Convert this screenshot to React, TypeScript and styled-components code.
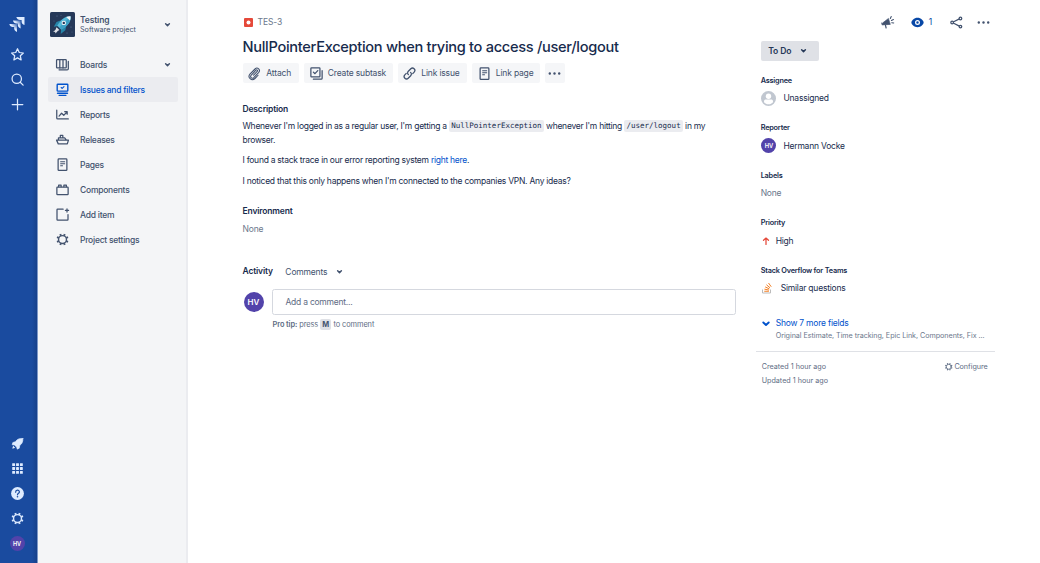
import React from "react";
import styled, { createGlobalStyle } from "styled-components";

const GlobalStyle = createGlobalStyle`
  * { box-sizing: border-box; }
  html, body, #root { margin: 0; height: 100%; }
  body {
    background: #fff;
    color: #172b4d;
    font-family: Inter, "Liberation Sans", sans-serif;
    font-size: 8.5px;
    overflow: hidden;
  }
`;

const Page = styled.div`
  display: flex;
  height: 562.5px;
`;

const Rail = styled.nav`
  width: 37.5px;
  flex: none;
  display: flex;
  flex-direction: column;
  justify-content: space-between;
  padding: 9px 2.5px 6.5px 0;
  color: #deebff;
  background: linear-gradient(to right, #1a4b9f 0, #1a4b9f 32px, #163f88 37.5px);
  border-right: 0.5px solid #7d98c8;
`;

const RailGroup = styled.div`
  display: flex;
  flex-direction: column;
`;

const RailItem = styled.div`
  height: 25px;
  display: flex;
  align-items: center;
  justify-content: center;
`;

const RailLogo = styled(RailItem)`
  height: 33px;
  padding: 0 1px 2.5px 0;
`;

const Sidebar = styled.aside`
  width: 150.5px;
  flex: none;
  background: #f4f5f7;
  border-right: 2px solid #ebecf0;
  padding: 12px 8px 0 10px;
`;

const ProjectHeader = styled.div`
  display: flex;
  align-items: center;
  height: 25px;
  padding: 0 3px 0 2.5px;
  margin-bottom: 15px;
  color: #42526e;
`;

const ProjectText = styled.div`
  flex: 1;
  margin-left: 5px;
`;

const ProjectName = styled.div`
  font-weight: 600;
  line-height: 10px;
  letter-spacing: -0.14px;
  margin-top: -1px;
`;

const ProjectKind = styled.div`
  font-size: 7.2px;
  line-height: 9px;
  letter-spacing: -0.02px;
`;

const NavItem = styled.div<{ $active?: boolean }>`
  display: flex;
  align-items: center;
  height: 25px;
  padding: 0 3px 0 7.5px;
  border-radius: 2px;
  font-weight: 500;
  letter-spacing: -0.24px;
  color: ${(p) => (p.$active ? "#0052cc" : "#42526e")};
  background: ${(p) => (p.$active ? "#ebecf0" : "transparent")};
`;

const NavLabel = styled.span`
  flex: 1;
  margin-left: 10px;
`;

const Main = styled.main`
  width: 493.3px;
  flex: none;
  margin-left: 54.5px;
  padding-top: 14.5px;
`;

const Breadcrumb = styled.div`
  display: flex;
  align-items: center;
  height: 15px;
  gap: 4.5px;
  padding-left: 1.5px;
  color: #6b778c;
  letter-spacing: -0.1px;
`;

const Title = styled.h1`
  margin: 8px 0 6px;
  font-size: 14.6px;
  line-height: 19.5px;
  font-weight: 500;
  letter-spacing: -0.3px;
  white-space: nowrap;
`;

const Toolbar = styled.div`
  display: flex;
  gap: 5px;
  margin-bottom: 19.5px;
`;

const ToolButton = styled.div<{ $w: number }>`
  width: ${(p) => p.$w}px;
  height: 20px;
  display: flex;
  align-items: center;
  padding-left: ${(p) => (p.$w > 20 ? 4.8 : 2.3)}px;
  gap: 4px;
  border-radius: 2px;
  background: #f5f6f8;
  color: #42526e;
  letter-spacing: -0.17px;
  white-space: nowrap;
`;

const Heading = styled.h2`
  margin: 0;
  font-size: 8.5px;
  line-height: 13px;
  font-weight: 600;
  letter-spacing: -0.16px;
`;

const Paragraph = styled.p<{ $top?: number }>`
  margin: ${(p) => p.$top ?? 6.5}px 0 0;
  line-height: 14.1px;
  letter-spacing: -0.262px;
`;

const Code = styled.code`
  font-family: "DejaVu Sans Mono", monospace;
  font-size: 7.5px;
  line-height: 1;
  letter-spacing: 0;
  background: #ebecf0;
  border-radius: 2px;
  padding: 1.2px 2.3px;
`;

const Link = styled.a`
  color: #0052cc;
`;

const Muted = styled.div`
  color: #6b778c;
  line-height: 14px;
  letter-spacing: -0.15px;
`;

const Environment = styled.section`
  margin-top: 17px;
  ${Muted} {
    margin-top: 4.5px;
  }
`;

const ActivityBar = styled.div`
  display: flex;
  align-items: center;
  height: 14px;
  margin-top: 28.5px;
  color: #42526e;
  letter-spacing: -0.18px;
  ${Heading} {
    color: #172b4d;
    margin-right: 12.5px;
  }
  svg {
    margin-left: 4.5px;
  }
`;

const CommentRow = styled.div`
  display: flex;
  align-items: center;
  margin-top: 10.5px;
  padding-left: 1px;
`;

const Avatar = styled.div<{ $size: number; $font: number }>`
  width: ${(p) => p.$size}px;
  height: ${(p) => p.$size}px;
  flex: none;
  border-radius: 50%;
  background: #5243aa;
  color: #fff;
  font-size: ${(p) => p.$font}px;
  font-weight: 600;
  letter-spacing: 0;
  display: flex;
  align-items: center;
  justify-content: center;
`;

const CommentBox = styled.div`
  flex: 1;
  height: 26px;
  margin-left: 8.5px;
  padding-left: 12.5px;
  border: 1px solid #d5d8df;
  border-radius: 2.5px;
  display: flex;
  align-items: center;
  color: #5e6c84;
  letter-spacing: -0.24px;
`;

const Tip = styled.div`
  margin: 4px 0 0 30px;
  font-size: 7.4px;
  line-height: 11px;
  letter-spacing: -0.08px;
  color: #5e6c84;
  b {
    font-weight: 600;
  }
`;

const Key = styled.kbd`
  font: 700 7.4px Inter, sans-serif;
  color: #42526e;
  background: #dfe1e6;
  border-radius: 2px;
  padding: 1px 2px;
  margin: 0 0.5px 0 0;
`;

const Details = styled.aside`
  width: 239px;
  flex: none;
  margin-left: 19.9px;
  padding: 14.5px 5px 0;
`;

const Actions = styled.div`
  display: flex;
  align-items: center;
  justify-content: flex-end;
  height: 15px;
  margin-right: -1px;
  color: #42526e;
`;

const Watch = styled.div`
  display: flex;
  align-items: center;
  gap: 4px;
  margin: 0 16.5px 0 14.5px;
  color: #0747a6;
`;

const ShareSlot = styled.div`
  display: flex;
  margin-right: 12px;
`;

const Status = styled.div`
  width: 58px;
  height: 20px;
  margin: 11px 0 15px;
  padding: 0 7.5px;
  display: flex;
  align-items: center;
  justify-content: space-between;
  border-radius: 2px;
  background: #dfe1e6;
  color: #253858;
  font-size: 8.6px;
  font-weight: 600;
  letter-spacing: -0.15px;
`;

const Field = styled.section`
  height: 47.5px;
`;

const FieldLabel = styled.h3`
  margin: 0;
  font-size: 7.3px;
  line-height: 10px;
  font-weight: 600;
  letter-spacing: -0.2px;
`;

const FieldValue = styled.div<{ $gap?: number; $muted?: boolean }>`
  display: flex;
  align-items: center;
  height: 16px;
  margin-top: 4.8px;
  gap: ${(p) => p.$gap ?? 0}px;
  color: ${(p) => (p.$muted ? "#6b778c" : "#172b4d")};
  letter-spacing: -0.22px;
`;

const AvatarSlot = styled.div`
  display: flex;
  padding-left: 0.75px;
`;

const More = styled.div`
  display: flex;
  gap: 5px;
  margin-top: 4px;
  color: #0052cc;
  line-height: 13px;
  letter-spacing: -0.22px;
`;

const MoreHint = styled.div`
  margin-left: 15px;
  font-size: 7.2px;
  line-height: 11px;
  letter-spacing: -0.05px;
  color: #6b778c;
  white-space: nowrap;
`;

const Footer = styled.footer`
  margin: 10px -5px 0;
  padding: 8px 7px 0 6px;
  border-top: 1px solid #dfe1e6;
  display: flex;
  justify-content: space-between;
  color: #5e6c84;
  font-size: 7.2px;
  line-height: 14px;
`;

const Configure = styled.div`
  display: flex;
  align-items: center;
  height: 14px;
  gap: 1px;
  letter-spacing: -0.04px;
`;

type IconProps = { size?: number; children: React.ReactNode };

const Icon = ({ size = 15, children }: IconProps) => (
  <svg
    width={size}
    height={size}
    viewBox="0 0 24 24"
    fill="none"
    stroke="currentColor"
    strokeWidth="2"
    strokeLinecap="round"
    strokeLinejoin="round"
    style={{ flex: "none" }}
  >
    {children}
  </svg>
);

const Chevron = () => (
  <Icon>
    <path d="M9 10.8l3 3 3-3" strokeWidth="2.4" />
  </Icon>
);

const Gear = ({ size = 15 }: { size?: number }) => (
  <Icon size={size}>
    <circle cx="12" cy="12" r="6.3" strokeWidth="2.2" />
    <g strokeWidth="3.1" strokeLinecap="butt">
      {[22.5, 67.5, 112.5, 157.5, 202.5, 247.5, 292.5, 337.5].map((a) => (
        <path key={a} d="M12 5.500V2.500" transform={`rotate(${a} 12 12)`} />
      ))}
    </g>
  </Icon>
);

const PageIcon = () => (
  <Icon>
    <rect x="5" y="3" width="14" height="18.500" rx="1.2" />
    <path d="M9 7.500h6.500M9 10.800h6.500M9 14h3" strokeWidth="1.7" />
  </Icon>
);

const Dots = () => (
  <Icon>
    <g fill="currentColor" stroke="none">
      <circle cx="4.500" cy="12" r="1.900" />
      <circle cx="12" cy="12" r="1.900" />
      <circle cx="19.500" cy="12" r="1.900" />
    </g>
  </Icon>
);

const JiraMark = () => (
  <svg width="16" height="16" viewBox="0 0 16 16">
    <defs>
      <linearGradient id="fade" x1="1" y1="0" x2="0.2" y2="0.8">
        <stop offset="0.15" stopColor="#deebff" stopOpacity="0.35" />
        <stop offset="0.55" stopColor="#deebff" />
      </linearGradient>
    </defs>
    <path d="M7.300 1h8.200v8.100c-1.900-.6-2.900-1.800-2.900-3.600V4h-1.500C9.200 4 7.900 3 7.300 1z" fill="#deebff" />
    <path d="M3.900 4.500h7.700v7.900C9.700 11.800 8.800 10.600 8.800 9V7.400H7.400C5.600 7.400 4.400 6.400 3.900 4.500z" fill="url(#fade)" />
    <path d="M.300 8h7.700v7.900C6.100 15.300 5.200 14.100 5.200 12.500v-1.600H3.800C2 10.900.8 9.900.3 8z" fill="url(#fade)" />
  </svg>
);

const ProjectAvatar = () => (
  <svg width="25" height="25" viewBox="0 0 25 25">
    <rect width="25" height="25" rx="1.5" fill="#253858" />
    <g fill="#6b7fa6">
      <circle cx="7" cy="4" r=".5" />
      <circle cx="4" cy="9" r=".4" />
      <circle cx="21" cy="15" r=".5" />
      <circle cx="17" cy="21" r=".5" />
      <circle cx="11" cy="3.500" r=".4" />
      <circle cx="22" cy="20" r=".4" />
    </g>
    <path d="M11 8.200L6.500 10l-2.700 4.800 4.500-.8zM16.500 13.500l-1.200 4.800-4.600 3.700.5-5z" fill="#2684a8" />
    <path d="M20.500 4.200c.5 4.800-1.500 8.800-9.300 13.300l-4-3.800C11.200 6.800 15.500 4 20.500 4.200z" fill="#57b8d8" />
    <path d="M20.500 4.200c.5 4.800-1.500 8.800-9.300 13.300l-2-1.900z" fill="#3d9fc4" />
    <path d="M20.500 4.200c.1 1.600 0 3-.6 4.300l-3.700-3.600c1.300-.5 2.700-.8 4.300-.7z" fill="#f4f5f7" />
    <circle cx="13.800" cy="10.900" r="2.200" fill="#f4f5f7" />
    <circle cx="13.800" cy="10.900" r="1.200" fill="#253858" />
    <path d="M6.500 15.200l2.900 2.900-1.700.8-2.200 2.700-.4-1.800-2 .3 2.400-2.400z" fill="#dfe1e6" />
  </svg>
);

const BoardsIcon = () => (
  <Icon>
    <rect x="2.500" y="4" width="15.500" height="13.500" rx="1" />
    <path d="M7.700 4v13.500M12.800 4v13.500M6.500 20.500h13c1 0 1.800-.8 1.800-1.800V7" />
  </Icon>
);

const IssuesIcon = () => (
  <Icon>
    <rect x="3.500" y="3.500" width="17" height="11" rx="1" strokeWidth="2.200" />
    <path d="M9.800 8.800l1.600 1.500 3-3" strokeWidth="1.700" />
    <path d="M4 18h16M6.500 21.300h11" strokeWidth="2.200" />
  </Icon>
);

const ReportsIcon = () => (
  <Icon>
    <path d="M2.800 5v12.500c0 .8.600 1.500 1.500 1.500h17M6.500 14.500l4-4.500 3.500 3.300 5-5.300M15.500 7.500h4v4" />
  </Icon>
);

const ReleasesIcon = () => (
  <Icon>
    <path d="M2.500 13h19l-1.800 6H5.200zM5.500 12.500V9.500h10l2.500 3M8.500 9V5.500h4V9" />
  </Icon>
);

const ComponentsIcon = () => (
  <Icon>
    <rect x="3" y="8" width="18" height="12" rx="1" />
    <path d="M5.800 7.500V5h4v2.500M14.200 7.500V5h4v2.500" />
  </Icon>
);

const AddItemIcon = () => (
  <Icon>
    <path d="M13 3.500H4.200c-.6 0-1 .4-1 1v15.300c0 .6.400 1 1 1h15.600c.6 0 1-.4 1-1V12M19.200 3v5M16.700 5.500h5" />
  </Icon>
);

const navItems: { label: string; icon: React.ReactNode; active?: boolean; open?: boolean }[] = [
  { label: "Boards", icon: <BoardsIcon />, open: true },
  { label: "Issues and filters", icon: <IssuesIcon />, active: true },
  { label: "Reports", icon: <ReportsIcon /> },
  { label: "Releases", icon: <ReleasesIcon /> },
  { label: "Pages", icon: <PageIcon /> },
  { label: "Components", icon: <ComponentsIcon /> },
  { label: "Add item", icon: <AddItemIcon /> },
  { label: "Project settings", icon: <Gear /> },
];

const AttachIcon = () => (
  <Icon>
    <path
      d="M10.500 14.700l5.800-6c1.500-1.600-.5-3.500-2-2l-7.500 7.800c-2.800 3.200 1 6.800 4 4l7.700-8c4-4.500-1.700-9.700-5.700-5.700L5 12.700c-5 5.500 2.500 12.500 7.700 7.300l5-5.200"
      strokeWidth="1.700"
    />
  </Icon>
);

const SubtaskIcon = () => (
  <Icon>
    <rect x="3" y="3" width="14.500" height="14.500" rx="1" />
    <path d="M7 9.800l2.500 2.500 4.500-5M7 21h12.500c.9 0 1.500-.6 1.500-1.500V7.500" />
  </Icon>
);

const LinkIcon = () => (
  <Icon>
    <path d="M10.300 13.800c-1.800-1.600-1.700-3.800-.2-5.300l4-4c3.500-3.400 8.800 1.600 5.400 5.200l-2.300 2.400M13.700 10.200c1.800 1.600 1.700 3.800.2 5.300l-4 4c-3.500 3.400-8.800-1.600-5.400-5.200l2.300-2.400" />
  </Icon>
);

const BugIcon = () => (
  <svg width="9" height="9" viewBox="0 0 9 9">
    <rect width="9" height="9" rx="1" fill="#e5493a" />
    <circle cx="4.500" cy="4.500" r="2" fill="#fff" />
  </svg>
);

const Megaphone = () => (
  <Icon>
    <path d="M4.500 12.500L13.500 5.500l3 9.500-11.500.8z" fill="currentColor" strokeWidth="1" />
    <path d="M3 13l.8 2.600M8.800 16.500l1 4.300" strokeWidth="1.900" />
    <path d="M16.500 5.500l1.500-3M18.300 8.800l3.200-1.600M18.800 12.300l3.200.5" strokeWidth="1.700" />
  </Icon>
);

const Eye = () => (
  <Icon>
    <path d="M12 4.500c-5.500 0-9.800 4.500-9.800 7.500s4.300 7.500 9.800 7.500 9.800-4.500 9.800-7.500S17.500 4.500 12 4.500z" fill="currentColor" stroke="none" />
    <circle cx="12" cy="12" r="3" stroke="#fff" strokeWidth="2" />
  </Icon>
);

const Share = () => (
  <Icon>
    <circle cx="5" cy="12" r="2.100" />
    <circle cx="18.300" cy="5.500" r="2.100" />
    <circle cx="18.300" cy="18.500" r="2.100" />
    <path d="M7.500 10.800l8.300-4.200M7.500 13.200l8.300 4.200" />
  </Icon>
);

const UserIcon = () => (
  <svg width="15" height="15" viewBox="0 0 24 24">
    <circle cx="12" cy="12" r="12" fill="#c1c7d0" />
    <circle cx="12" cy="8.300" r="4.300" fill="#fff" />
    <path d="M4.800 18v-1.500c0-2 1.300-3 3-3h8.400c1.700 0 3 1 3 3V18c-1.700 2-4.300 3.300-7.200 3.300S6.500 20 4.800 18z" fill="#fff" />
  </svg>
);

const PriorityIcon = () => (
  <svg width="10" height="10" viewBox="0 0 16 16" fill="none" stroke="#e5493a" strokeWidth="2" strokeLinecap="round" strokeLinejoin="round">
    <path d="M8 13.500V3.300M4 6.800L8 3.300l4 3.500" />
  </svg>
);

const StackIcon = () => (
  <svg width="12" height="12" viewBox="0 0 24 24" fill="none">
    <path d="M3 15v7h16v-7" stroke="#bcbbbb" strokeWidth="2" />
    <path d="M6.500 18.500h9.300M6.900 14.300l9.100 1.900M8.300 9.800l8.400 3.900M10.900 5.500l7.100 6M15 2l5.500 7.500" stroke="#f48024" strokeWidth="2" />
  </svg>
);

export default function App() {
  return (
    <>
      <GlobalStyle />
      <Page>
        <Rail>
          <RailGroup>
            <RailLogo><JiraMark /></RailLogo>
            <RailItem>
              <Icon>
                <path d="M12 2.800l2.800 6 6.600.8-4.900 4.500 1.300 6.600L12 17.400l-5.800 3.300 1.300-6.600L2.600 9.600l6.600-.8z" />
              </Icon>
            </RailItem>
            <RailItem>
              <Icon>
                <circle cx="10.800" cy="10.800" r="7.500" />
                <path d="M16.300 16.300l4.700 4.700" />
              </Icon>
            </RailItem>
            <RailItem>
              <Icon><path d="M12 3.500v17M3.500 12h17" /></Icon>
            </RailItem>
          </RailGroup>
          <RailGroup>
            <RailItem>
              <Icon>
                <path d="M20.500 4c-5-.8-9 1-11.800 5L4.500 10.500 3.500 14l3.500.3 3.800 3.500L11.500 21l3.300-1.500.8-4.300c4-3 5.500-6.700 4.900-11.200z" fill="currentColor" strokeWidth="1" />
                <path d="M5.500 17l-.8 2.300L7 18.500" strokeWidth="1.800" />
              </Icon>
            </RailItem>
            <RailItem>
              <Icon>
                <g fill="currentColor" stroke="none">
                  {[3.5, 9.7, 15.9].map((y) =>
                    [3.5, 9.7, 15.9].map((x) => (
                      <rect key={`${x}-${y}`} x={x} y={y} width="4.600" height="4.600" rx=".6" />
                    ))
                  )}
                </g>
              </Icon>
            </RailItem>
            <RailItem>
              <Icon>
                <circle cx="12" cy="12" r="10.300" fill="currentColor" stroke="none" />
                <path d="M9 9.800c0-4 6-4 6-.3 0 2.200-3 2.200-3 4.500" stroke="#1a4b9f" />
                <circle cx="12" cy="17.200" r="1.300" fill="#1a4b9f" stroke="none" />
              </Icon>
            </RailItem>
            <RailItem><Gear /></RailItem>
            <RailItem><Avatar $size={15} $font={5.6}>HV</Avatar></RailItem>
          </RailGroup>
        </Rail>

        <Sidebar>
          <ProjectHeader>
            <ProjectAvatar />
            <ProjectText>
              <ProjectName>Testing</ProjectName>
              <ProjectKind>Software project</ProjectKind>
            </ProjectText>
            <Chevron />
          </ProjectHeader>
          {navItems.map((item) => (
            <NavItem key={item.label} $active={item.active}>
              {item.icon}
              <NavLabel>{item.label}</NavLabel>
              {item.open && <Chevron />}
            </NavItem>
          ))}
        </Sidebar>

        <Main>
          <Breadcrumb><BugIcon />TES-3</Breadcrumb>
          <Title>NullPointerException when trying to access /user/logout</Title>
          <Toolbar>
            <ToolButton $w={56.5}><AttachIcon />Attach</ToolButton>
            <ToolButton $w={88.5}><SubtaskIcon />Create subtask</ToolButton>
            <ToolButton $w={69.5}><LinkIcon />Link issue</ToolButton>
            <ToolButton $w={68}><PageIcon />Link page</ToolButton>
            <ToolButton $w={20}><Dots /></ToolButton>
          </Toolbar>
          <Heading>Description</Heading>
          <Paragraph $top={3}>
            Whenever I'm logged in as a regular user, I'm getting a <Code>NullPointerException</Code> whenever I'm
            hitting <Code>/user/logout</Code> in my browser.
          </Paragraph>
          <Paragraph>
            I found a stack trace in our error reporting system <Link>right here</Link>.
          </Paragraph>
          <Paragraph>I noticed that this only happens when I'm connected to the companies VPN. Any ideas?</Paragraph>
          <Environment>
            <Heading>Environment</Heading>
            <Muted>None</Muted>
          </Environment>
          <ActivityBar>
            <Heading>Activity</Heading>
            Comments
            <Chevron />
          </ActivityBar>
          <CommentRow>
            <Avatar $size={20} $font={8}>HV</Avatar>
            <CommentBox>Add a comment...</CommentBox>
          </CommentRow>
          <Tip>
            <b>Pro tip:</b> press <Key>M</Key> to comment
          </Tip>
        </Main>

        <Details>
          <Actions>
            <Megaphone />
            <Watch><Eye />1</Watch>
            <ShareSlot><Share /></ShareSlot>
            <Dots />
          </Actions>
          <Status>To Do<Chevron /></Status>
          <Field>
            <FieldLabel>Assignee</FieldLabel>
            <FieldValue $gap={7}><AvatarSlot><UserIcon /></AvatarSlot>Unassigned</FieldValue>
          </Field>
          <Field>
            <FieldLabel>Reporter</FieldLabel>
            <FieldValue $gap={7}>
              <AvatarSlot><Avatar $size={15} $font={5.8}>HV</Avatar></AvatarSlot>Hermann Vocke
            </FieldValue>
          </Field>
          <Field>
            <FieldLabel>Labels</FieldLabel>
            <FieldValue $muted>None</FieldValue>
          </Field>
          <Field>
            <FieldLabel>Priority</FieldLabel>
            <FieldValue $gap={5}><PriorityIcon />High</FieldValue>
          </Field>
          <Field>
            <FieldLabel>Stack Overflow for Teams</FieldLabel>
            <FieldValue $gap={8}><StackIcon />Similar questions</FieldValue>
          </Field>
          <More>
            <svg width="10" height="13" viewBox="0 0 10 13" fill="none" stroke="currentColor" strokeWidth="1.900" strokeLinecap="round" strokeLinejoin="round">
              <path d="M2.300 5.500L5 8l2.700-2.500" />
            </svg>
            Show 7 more fields
          </More>
          <MoreHint>Original Estimate, Time tracking, Epic Link, Components, Fix ...</MoreHint>
          <Footer>
            <div>
              <div>Created 1 hour ago</div>
              <div>Updated 1 hour ago</div>
            </div>
            <Configure><Gear size={9.5} />Configure</Configure>
          </Footer>
        </Details>
      </Page>
    </>
  );
}
